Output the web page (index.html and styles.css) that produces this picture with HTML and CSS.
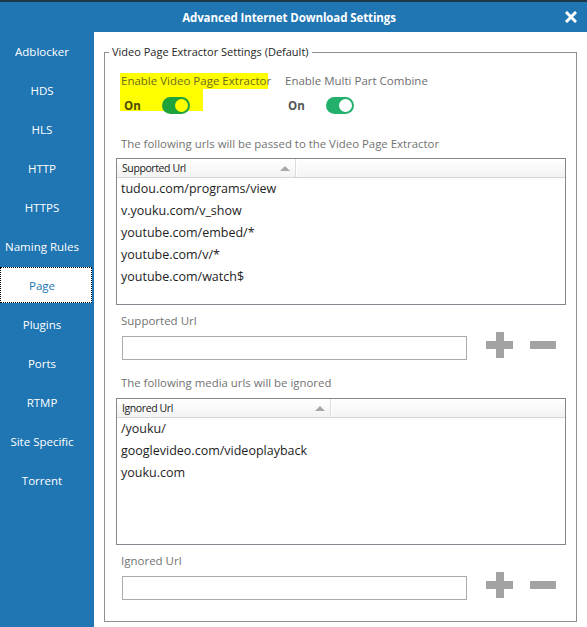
FILE: index.html
```html
<!DOCTYPE html>
<html lang="en">
<head>
<meta charset="utf-8">
<title>Advanced Internet Download Settings</title>
<link rel="stylesheet" href="styles.css">
</head>
<body>
<div class="window">
  <header class="titlebar">
    <span class="spacer"></span>
    <h1 class="title">Advanced Internet Download Settings</h1>
    <button class="close" aria-label="Close">
      <svg width="12" height="12" viewBox="0 0 12 12"><path d="M2 2 L10 10 M10 2 L2 10" stroke="#fff" stroke-width="3" stroke-linecap="square"/></svg>
    </button>
  </header>
  <div class="body">
    <nav class="sidebar">
      <a class="nav-item">Adblocker</a>
      <a class="nav-item">HDS</a>
      <a class="nav-item">HLS</a>
      <a class="nav-item">HTTP</a>
      <a class="nav-item">HTTPS</a>
      <a class="nav-item">Naming Rules</a>
      <a class="nav-item active">Page</a>
      <a class="nav-item">Plugins</a>
      <a class="nav-item">Ports</a>
      <a class="nav-item">RTMP</a>
      <a class="nav-item">Site Specific</a>
      <a class="nav-item">Torrent</a>
    </nav>
    <main class="content">
      <fieldset class="group">
        <legend class="legend">Video Page Extractor Settings (Default)</legend>
        <div class="inner">
          <div class="options">
            <div class="option highlighted">
              <div class="opt-label">Enable Video Page Extractor</div>
              <div class="opt-row"><span class="on">On</span><span class="toggle"><span class="knob"></span></span></div>
            </div>
            <div class="option">
              <div class="opt-label">Enable Multi Part Combine</div>
              <div class="opt-row"><span class="on">On</span><span class="toggle"><span class="knob"></span></span></div>
            </div>
          </div>

          <p class="hint hint-first">The following urls will be passed to the Video Page Extractor</p>
          <div class="list">
            <div class="list-head">
              <div class="col col-a1">Supported Url<span class="sort"></span></div>
              <div class="col col-rest"></div>
            </div>
            <div class="row">tudou.com/programs/view</div>
            <div class="row">v.youku.com/v_show</div>
            <div class="row">youtube.com/embed/*</div>
            <div class="row">youtube.com/v/*</div>
            <div class="row">youtube.com/watch$</div>
          </div>
          <div class="field-label">Supported Url</div>
          <div class="add-row">
            <input class="text-input" type="text">
            <span class="btn-plus"></span>
            <span class="btn-minus"></span>
          </div>

          <p class="hint hint-second">The following media urls will be ignored</p>
          <div class="list list-second">
            <div class="list-head">
              <div class="col col-a2">Ignored Url<span class="sort"></span></div>
              <div class="col col-rest"></div>
            </div>
            <div class="row">/youku/</div>
            <div class="row">googlevideo.com/videoplayback</div>
            <div class="row">youku.com</div>
          </div>
          <div class="field-label">Ignored Url</div>
          <div class="add-row">
            <input class="text-input" type="text">
            <span class="btn-plus"></span>
            <span class="btn-minus"></span>
          </div>
        </div>
      </fieldset>
    </main>
  </div>
</div>
</body>
</html>
```
FILE: styles.css
```css
* { box-sizing: border-box; }
html, body { margin: 0; padding: 0; }
body {
  width: 587px;
  height: 627px;
  overflow: hidden;
  font-family: "Open Sans", "Noto Sans", sans-serif;
  background: #fff;
}
.window {
  display: flex;
  flex-direction: column;
  height: 627px;
  border-top: 2px solid #1d3547;
}
.titlebar {
  display: grid;
  grid-template-columns: 1fr auto 1fr;
  align-items: center;
  height: 30px;
  background: #2075b3;
  padding-right: 9px;
}
.title {
  margin: 0;
  font-size: 11.5px;
  font-weight: 700;
  color: #fff;
  letter-spacing: -0.1px;
}
.close {
  justify-self: end;
  width: 14px;
  height: 14px;
  padding: 0;
  border: 0;
  background: transparent;
  display: flex;
  align-items: center;
  justify-content: center;
}
.body {
  display: flex;
  flex: 1;
  min-height: 0;
}
.sidebar {
  width: 94px;
  flex: none;
  background: #2075b3;
  display: flex;
  flex-direction: column;
  gap: 3px;
  padding-top: 1px;
}
.nav-item {
  height: 36px;
  display: flex;
  align-items: center;
  justify-content: center;
  color: #fff;
  font-size: 11.5px;
  white-space: nowrap;
  padding-right: 10px;
}
.nav-item.active {
  background: #fff;
  color: #2075b3;
  border: 1px dotted #000;
  margin-right: 2px;
  padding-right: 8px;
}
.content {
  flex: 1;
  padding: 12px 0 0 10px;
}
.group {
  margin: 0;
  padding: 0;
  width: 473px;
  height: 578px;
  border: 1px solid #8f8f8f;
}
.legend {
  margin-left: 4px;
  padding: 0 3px;
  font-size: 11px;
  line-height: 16px;
  color: #262626;
}
.inner {
  padding: 0 10px 0 11px;
}
.options {
  display: flex;
  padding-top: 13px;
}
.option {
  display: flex;
  flex-direction: column;
}
.option:first-child { width: 164px; margin-left: 4px; }
.opt-label {
  font-size: 11.5px;
  line-height: 16px;
  color: #6e6e6e;
  padding-left: 1px;
  white-space: nowrap;
}
.opt-row {
  display: flex;
  align-items: center;
  height: 25px;
  padding-top: 8px;
  padding-left: 4px;
}
.on {
  font-size: 11.5px;
  font-weight: 700;
  color: #555;
  width: 38px;
}
.toggle {
  width: 28px;
  height: 17px;
  border-radius: 9px;
  background: #22b06c;
  display: flex;
  align-items: center;
  justify-content: flex-end;
  padding-right: 2px;
}
.knob {
  width: 13px;
  height: 13px;
  border-radius: 50%;
  background: #fff;
}
.highlighted .opt-label {
  background: #ffff00;
  color: #6d6a1e;
  width: 148px;
}
.highlighted .opt-row {
  width: 83px;
  background: linear-gradient(#ffff00 0 22px, transparent 22px);
}
.highlighted .on { color: #4d4a00; }
.highlighted .toggle { background: #1ea23a; }
.highlighted .knob { background: #ffff00; }

.hint {
  margin: 0;
  font-size: 11.4px;
  line-height: 16px;
  color: #727272;
  padding-left: 5px;
}
.hint-first { margin-top: 22px; }
.hint-second { margin-top: 15px; }
.list {
  margin-top: 6px;
  height: 147px;
  border: 1px solid #838790;
  background: #fff;
}
.list-second { margin-top: 7px; }
.list-head {
  display: flex;
  height: 19px;
  background: linear-gradient(#ffffff, #f3f3f3);
  border-bottom: 1px solid #d6d6d6;
}
.col {
  display: flex;
  align-items: center;
  font-size: 10.5px;
  color: #1a1a1a;
  padding-left: 5px;
  letter-spacing: -0.4px;
}
.col-a1 { width: 179px; border-right: 1px solid #dcdcdc; box-shadow: 1px 0 0 #fff; }
.col-a2 { width: 214px; border-right: 1px solid #dcdcdc; box-shadow: 1px 0 0 #fff; }
.col-rest { flex: 1; }
.sort {
  margin-left: auto;
  margin-right: 5px;
  width: 0;
  height: 0;
  border-left: 5px solid transparent;
  border-right: 5px solid transparent;
  border-bottom: 5px solid #a8a8a8;
}
.row {
  height: 22px;
  line-height: 22px;
  padding-left: 4px;
  font-size: 12.5px;
  color: #1e1e1e;
}
.field-label {
  margin-top: 8px;
  font-size: 11.5px;
  line-height: 16px;
  color: #727272;
  padding-left: 5px;
}
.add-row {
  display: flex;
  align-items: flex-start;
  margin-top: 7px;
  padding-left: 6px;
}
.text-input {
  width: 345px;
  height: 24px;
  border: 1px solid #ababab;
  margin: 0;
  padding: 0;
}
.btn-plus {
  width: 27px;
  height: 26px;
  margin-left: 19px;
  margin-top: -4px;
  background:
    linear-gradient(#a3a3a3, #a3a3a3) center / 27px 8px no-repeat,
    linear-gradient(#a3a3a3, #a3a3a3) center / 8px 26px no-repeat;
}
.btn-minus {
  width: 26px;
  height: 8px;
  margin-left: 17px;
  margin-top: 5px;
  background: #a3a3a3;
  border-radius: 1px;
}
```
